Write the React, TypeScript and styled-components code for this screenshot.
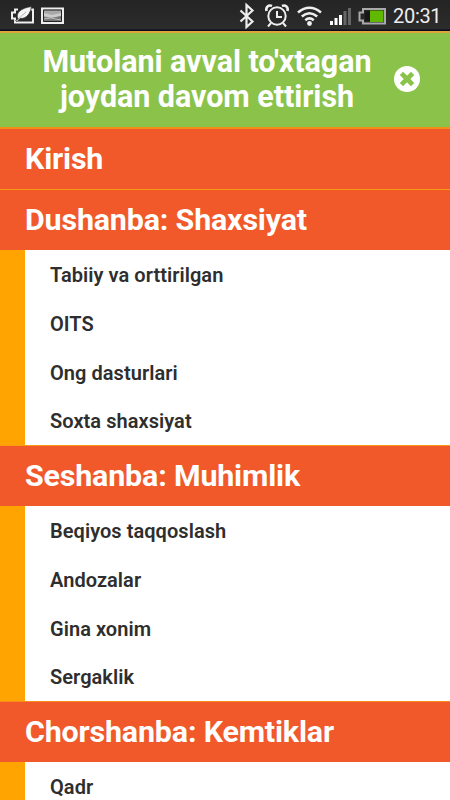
import React from "react";
import styled, { createGlobalStyle } from "styled-components";

const GlobalStyle = createGlobalStyle`
  html, body { margin: 0; height: 100%; overflow: hidden; background: #fff; }
  *, *::before, *::after { box-sizing: border-box; }
`;

const Screen = styled.main`
  display: flex;
  flex-direction: column;
  width: 450px;
  height: 800px;
  overflow: hidden;
  background: #fff;
  font-family: Roboto, "Liberation Sans", sans-serif;
`;

const StatusBar = styled.header`
  display: flex;
  flex: none;
  align-items: center;
  justify-content: space-between;
  height: 31px;
  background: linear-gradient(#242424, #2c2c2c 93%, #080b22 97%);
`;

const StatusIcons = styled.svg`
  display: block;
  flex: none;
`;

const StatusRight = styled.div`
  display: flex;
  align-items: center;
  gap: 7px;
  padding-right: 9px;
`;

const Clock = styled.time`
  width: 48px;
  color: #eee;
  font-size: 20px;
  line-height: 31px;
  padding-top: 2px;
  letter-spacing: -0.3px;
  white-space: nowrap;
`;

const ResumeBar = styled.section`
  display: flex;
  flex: none;
  align-items: center;
  height: 96px;
  padding: 0 30px 0 32px;
  border-top: 2px solid #dda536;
  background: #8bc34a;
`;

const ResumeText = styled.h1`
  flex: 1;
  margin: 0 0 2px;
  color: #fff;
  font-size: 30.5px;
  font-weight: 700;
  line-height: 35px;
  letter-spacing: -0.05px;
  text-align: center;
  white-space: nowrap;
`;

const CloseButton = styled.button`
  display: flex;
  width: 26px;
  height: 26px;
  margin: 0 0 2px 12px;
  padding: 0;
  border: 0;
  background: none;
`;

const Chapter = styled.section`
  flex: none;
`;

const ChapterTitle = styled.h2<{ $height: number; $line: string; $lineWidth: number }>`
  height: ${(p) => p.$height}px;
  margin: 0;
  padding-left: 25px;
  border-top: ${(p) => p.$lineWidth}px solid ${(p) => p.$line};
  background: #f1592a;
  color: #fff;
  font-size: 30.4px;
  font-weight: 700;
  line-height: 59px;
  letter-spacing: -0.16px;
  white-space: nowrap;
`;

const Topics = styled.ul`
  display: grid;
  grid-auto-rows: 48.75px;
  margin: 0;
  padding: 0;
  border-left: 25px solid #ffa400;
  list-style: none;
`;

const Topic = styled.li`
  padding-left: 25px;
  color: #2e2e2e;
  font-size: 20px;
  font-weight: 600;
  line-height: 50px;
  letter-spacing: 0.05px;
  white-space: nowrap;
`;

type ChapterData = { title: string; height: number; line: string; lineWidth: number; topics: string[] };

const chapters: ChapterData[] = [
  { title: "Kirish", height: 62, line: "#f08e19", lineWidth: 2, topics: [] },
  { title: "Dushanba: Shaxsiyat", height: 61, line: "#f79b12", lineWidth: 1, topics: ["Tabiiy va orttirilgan", "OITS", "Ong dasturlari", "Soxta shaxsiyat"] },
  { title: "Seshanba: Muhimlik", height: 61, line: "#f99a13", lineWidth: 1, topics: ["Beqiyos taqqoslash", "Andozalar", "Gina xonim", "Sergaklik"] },
  { title: "Chorshanba: Kemtiklar", height: 61, line: "#f98b1b", lineWidth: 1, topics: ["Qadr"] },
];

const NotificationIcons = () => (
  <StatusIcons width="80" height="31" viewBox="0 0 80 31">
    <path d="M18 9.5h-3v3h-3v6h3v4h18V9.5h-3" fill="none" stroke="#eee" strokeWidth="2" />
    <path d="M18 19C15 13 21 8 31.5 6.5C30.5 13 27 19 20 18.5L17 21.5L15.5 20.5Z" fill="#f4f4f4" stroke="#292929" strokeWidth=".7" />
    <path d="M18 19l8-7" stroke="#888" strokeWidth=".6" />
    <path d="M42 8.5h21v14.5H42z" fill="#999" stroke="#eee" strokeWidth="2" />
    <path d="M43.5 10h18v11.5h-18z" fill="#a8a8a8" stroke="#222" />
    <path d="M44 13l8 2 9-2v3l-9 2-8-2z" fill="#ccc" />
    <path d="M44 17l7 1 10-2v5H44z" fill="#777" />
    <path d="M44 19l7-1 10 2" stroke="#bbb" fill="none" />
  </StatusIcons>
);

const SystemIcons = () => (
  <StatusIcons width="148" height="31" viewBox="238 0 148 31">
    <path d="M240.5 10.5l12 11-6 5.5V5l6 5.5-12 11" fill="none" stroke="#eee" strokeWidth="2.2" strokeLinejoin="miter" />
    <g fill="none" stroke="#eee" strokeWidth="2">
      <circle cx="277" cy="16" r="8.7" />
      <path d="M277 11v6h5M271 23l-3 3.5M283 23l3 3.5" />
      <path d="M266.5 11c-1-4 2-6.5 5.5-5M287.5 11c1-4-2-6.5-5.5-5" strokeWidth="2.6" />
    </g>
    <g fill="none" stroke="#eee" strokeWidth="2.6">
      <path d="M298 12.5q11.5-9.500 23 0M301.8 16.5q7.7-6.5 15.4 0M305.3 20.2q4.2-3.5 8.4 0" />
      <circle cx="309.5" cy="23.5" r="2.4" fill="#eee" stroke="none" />
    </g>
    <path d="M330 21h3v4h-3zM334.5 18h3v7h-3zM339 15h3v10h-3z" fill="#fff" />
    <path d="M343.5 11h3v14h-3zM348 8h3v17h-3z" fill="#666" />
    <path d="M363 9h22v14.5h-22v-3h-3.5v-8h3.5z" fill="#272727" stroke="#aaa" strokeWidth="2" />
    <path d="M370 10.5h13.5V22H370z" fill="#60b900" />
    <path d="M365 11h5v10h-5z" fill="#171717" />
  </StatusIcons>
);

const CloseIcon = () => (
  <svg width="26" height="26" viewBox="0 0 26 26">
    <circle cx="13" cy="13" r="13" fill="#fff" />
    <path d="M9 9l8 8M17 9l-8 8" stroke="#8bc34a" strokeWidth="4.6" strokeLinecap="square" />
  </svg>
);

export default function App() {
  return (
    <Screen>
      <GlobalStyle />
      <StatusBar>
        <NotificationIcons />
        <StatusRight>
          <SystemIcons />
          <Clock>20:31</Clock>
        </StatusRight>
      </StatusBar>
      <ResumeBar>
        <ResumeText>
          Mutolani avval to'xtagan
          <br />
          joydan davom ettirish
        </ResumeText>
        <CloseButton aria-label="Yopish">
          <CloseIcon />
        </CloseButton>
      </ResumeBar>
      {chapters.map((chapter) => (
        <Chapter key={chapter.title}>
          <ChapterTitle $height={chapter.height} $line={chapter.line} $lineWidth={chapter.lineWidth}>
            {chapter.title}
          </ChapterTitle>
          {chapter.topics.length > 0 && (
            <Topics>
              {chapter.topics.map((topic) => (
                <Topic key={topic}>{topic}</Topic>
              ))}
            </Topics>
          )}
        </Chapter>
      ))}
    </Screen>
  );
}
